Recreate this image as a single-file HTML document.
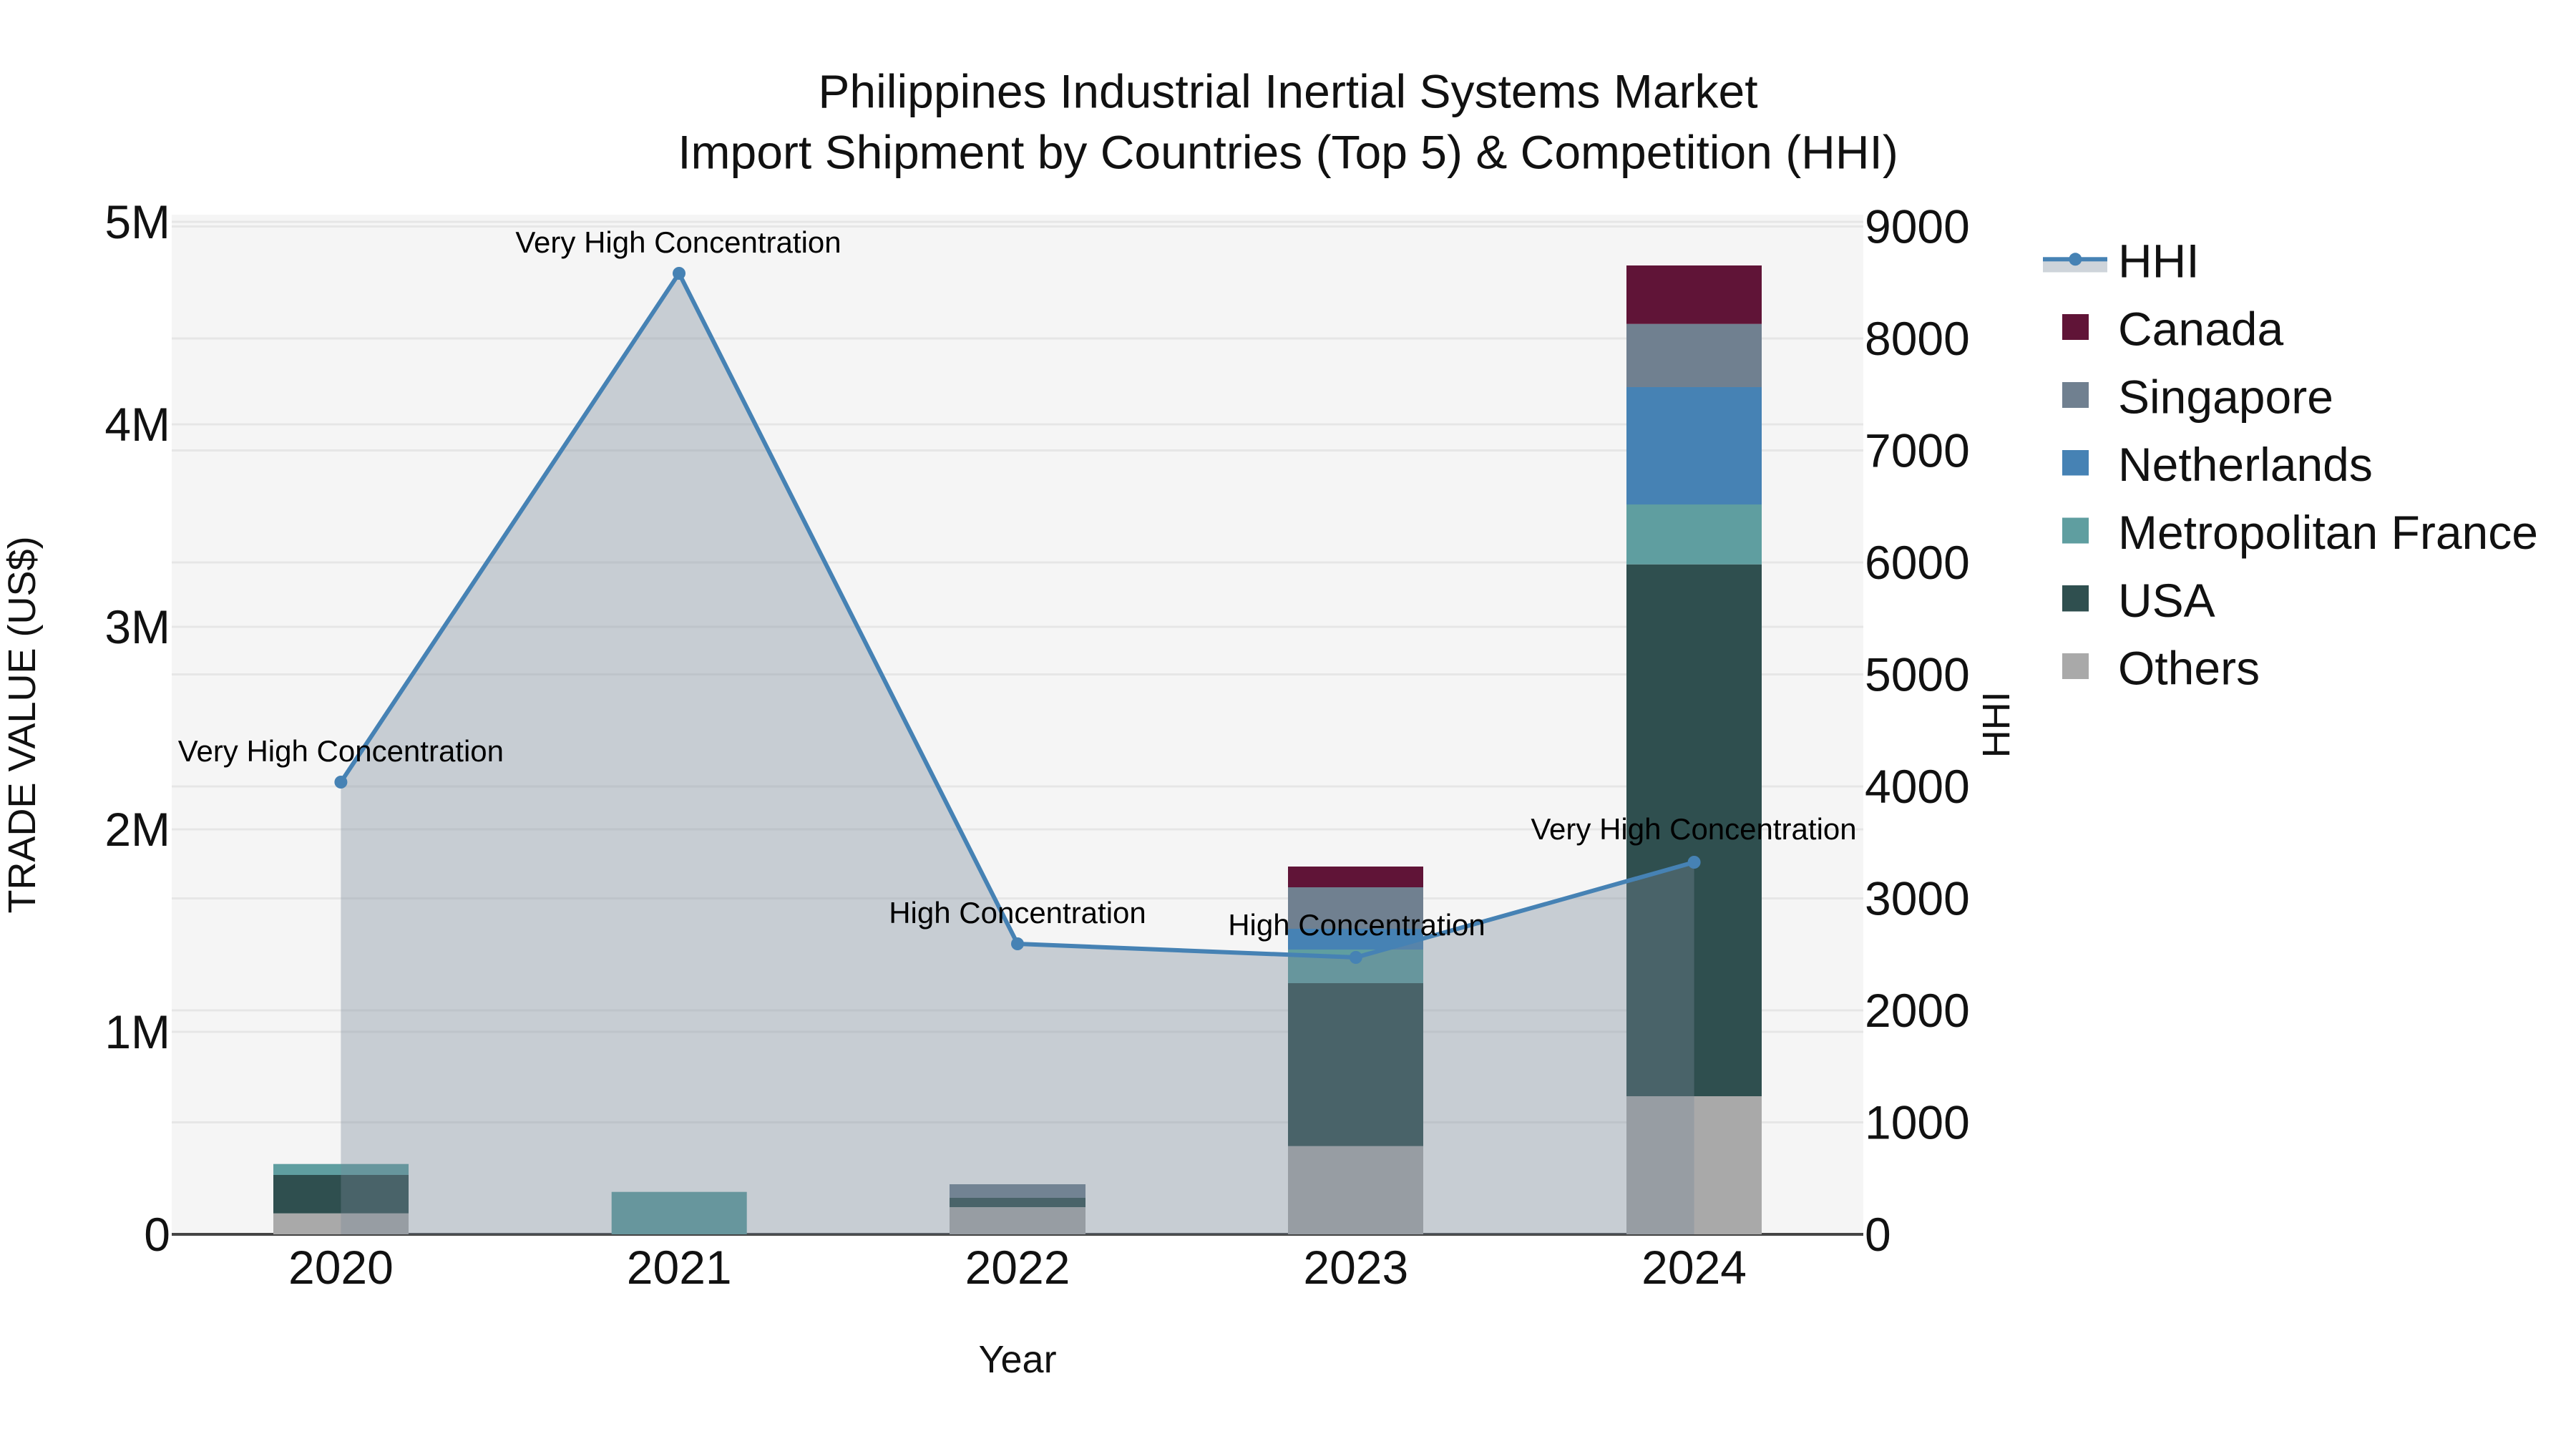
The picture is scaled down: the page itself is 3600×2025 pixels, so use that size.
<!DOCTYPE html>
<html>
<head>
<meta charset="utf-8">
<style>
html,body{margin:0;padding:0;background:#fff;width:3600px;height:2025px;overflow:hidden}
svg{display:block}
text{font-family:"Liberation Sans",sans-serif;fill:#111}
.tick{font-size:66px}
.ann{font-size:42px;fill:#000;text-anchor:middle}
</style>
</head>
<body>
<svg width="3600" height="2025" viewBox="0 0 3600 2025" xmlns="http://www.w3.org/2000/svg">
<rect width="3600" height="2025" fill="#fff"/>
<rect x="240" y="300" width="2364" height="1425" fill="#f5f5f5"/>
<g stroke="#e6e6e6" stroke-width="3">
<path d="M240 1442H2604M240 1159H2604M240 876H2604M240 593H2604M240 310H2604"/>
<path d="M240 1568.5H2604M240 1412H2604M240 1255.5H2604M240 1099H2604M240 942.5H2604M240 786H2604M240 629.5H2604M240 473H2604M240 316.5H2604"/>
</g>
<rect x="240" y="1723" width="2364" height="4" fill="#444"/>
<!-- bars -->
<g>
<rect x="382" y="1695.7" width="189" height="29.3" fill="#A9A9A9"/>
<rect x="382" y="1642" width="189" height="53.7" fill="#2F4F4F"/>
<rect x="382" y="1626.7" width="189" height="15.3" fill="#5F9EA0"/>
<rect x="854.7" y="1665.7" width="189" height="59.3" fill="#5F9EA0"/>
<rect x="1327" y="1687" width="190" height="38" fill="#A9A9A9"/>
<rect x="1327" y="1674" width="190" height="13" fill="#2F4F4F"/>
<rect x="1327" y="1655" width="190" height="19" fill="#708090"/>
<rect x="1800" y="1601.7" width="189" height="123.3" fill="#A9A9A9"/>
<rect x="1800" y="1374" width="189" height="227.7" fill="#2F4F4F"/>
<rect x="1800" y="1327" width="189" height="47" fill="#5F9EA0"/>
<rect x="1800" y="1298" width="189" height="29" fill="#4682B4"/>
<rect x="1800" y="1240" width="189" height="58" fill="#708090"/>
<rect x="1800" y="1211" width="189" height="29" fill="#601437"/>
<rect x="2273" y="1532" width="189" height="193" fill="#A9A9A9"/>
<rect x="2273" y="788.7" width="189" height="743.3" fill="#2F4F4F"/>
<rect x="2273" y="705" width="189" height="83.7" fill="#5F9EA0"/>
<rect x="2273" y="541" width="189" height="164" fill="#4682B4"/>
<rect x="2273" y="452.7" width="189" height="88.3" fill="#708090"/>
<rect x="2273" y="371" width="189" height="81.7" fill="#601437"/>
</g>
<!-- area -->
<polygon points="476.4,1093 949,382 1422,1319 1894.8,1338 2367.6,1205 2367.6,1725 476.4,1725" fill="rgba(119,136,153,0.36)"/>
<!-- line -->
<polyline points="476.4,1093 949,382 1422,1319 1894.8,1338 2367.6,1205" fill="none" stroke="#4682B4" stroke-width="6" stroke-linejoin="round"/>
<g fill="#4682B4">
<circle cx="476.4" cy="1093" r="9"/>
<circle cx="949" cy="382" r="9"/>
<circle cx="1422" cy="1319" r="9"/>
<circle cx="1894.8" cy="1338" r="9"/>
<circle cx="2367.6" cy="1205" r="9"/>
</g>
<!-- annotations -->
<text class="ann" x="476.4" y="1064">Very High Concentration</text>
<text class="ann" x="948" y="353">Very High Concentration</text>
<text class="ann" x="1422" y="1290">High Concentration</text>
<text class="ann" x="1896" y="1307">High Concentration</text>
<text class="ann" x="2367" y="1173">Very High Concentration</text>
<!-- title -->
<text x="1800" y="150.5" font-size="66" text-anchor="middle">Philippines Industrial Inertial Systems Market</text>
<text x="1800" y="235.7" font-size="66" text-anchor="middle">Import Shipment by Countries (Top 5) &amp; Competition (HHI)</text>
<!-- left ticks -->
<g class="tick" text-anchor="end">
<text x="238" y="1748">0</text>
<text x="238" y="1465">1M</text>
<text x="238" y="1182">2M</text>
<text x="238" y="899">3M</text>
<text x="238" y="616">4M</text>
<text x="238" y="333">5M</text>
</g>
<!-- right ticks -->
<g class="tick">
<text x="2606" y="1748">0</text>
<text x="2606" y="1591.5">1000</text>
<text x="2606" y="1435">2000</text>
<text x="2606" y="1278.5">3000</text>
<text x="2606" y="1122">4000</text>
<text x="2606" y="965.5">5000</text>
<text x="2606" y="809">6000</text>
<text x="2606" y="652.5">7000</text>
<text x="2606" y="496">8000</text>
<text x="2606" y="339.5">9000</text>
</g>
<!-- x ticks -->
<g class="tick" text-anchor="middle">
<text x="476.4" y="1794">2020</text>
<text x="949.2" y="1794">2021</text>
<text x="1422" y="1794">2022</text>
<text x="1894.8" y="1794">2023</text>
<text x="2367.6" y="1794">2024</text>
</g>
<!-- axis titles -->
<text x="1422" y="1918" font-size="54" text-anchor="middle">Year</text>
<text transform="translate(49 1013) rotate(-90)" font-size="54" text-anchor="middle">TRADE VALUE (US$)</text>
<text transform="translate(2808 1012.7) rotate(-90)" font-size="54" text-anchor="middle">HHI</text>
<!-- legend -->
<rect x="2855" y="360" width="90" height="20.5" fill="rgba(119,136,153,0.36)"/>
<rect x="2855" y="359.3" width="90" height="6" fill="#4682B4"/>
<circle cx="2900.3" cy="362.3" r="9" fill="#4682B4"/>
<rect x="2882" y="439" width="37" height="36" fill="#601437"/>
<rect x="2882" y="534" width="37" height="36" fill="#708090"/>
<rect x="2882" y="629" width="37" height="35.5" fill="#4682B4"/>
<rect x="2882" y="723.5" width="37" height="36" fill="#5F9EA0"/>
<rect x="2882" y="818" width="37" height="36.5" fill="#2F4F4F"/>
<rect x="2882" y="913" width="37" height="36" fill="#A9A9A9"/>
<g class="tick">
<text x="2960" y="387.7">HHI</text>
<text x="2960" y="482.5">Canada</text>
<text x="2960" y="577.4">Singapore</text>
<text x="2960" y="672.2">Netherlands</text>
<text x="2960" y="767">Metropolitan France</text>
<text x="2960" y="861.9">USA</text>
<text x="2960" y="956.7">Others</text>
</g>
</svg>
</body>
</html>
